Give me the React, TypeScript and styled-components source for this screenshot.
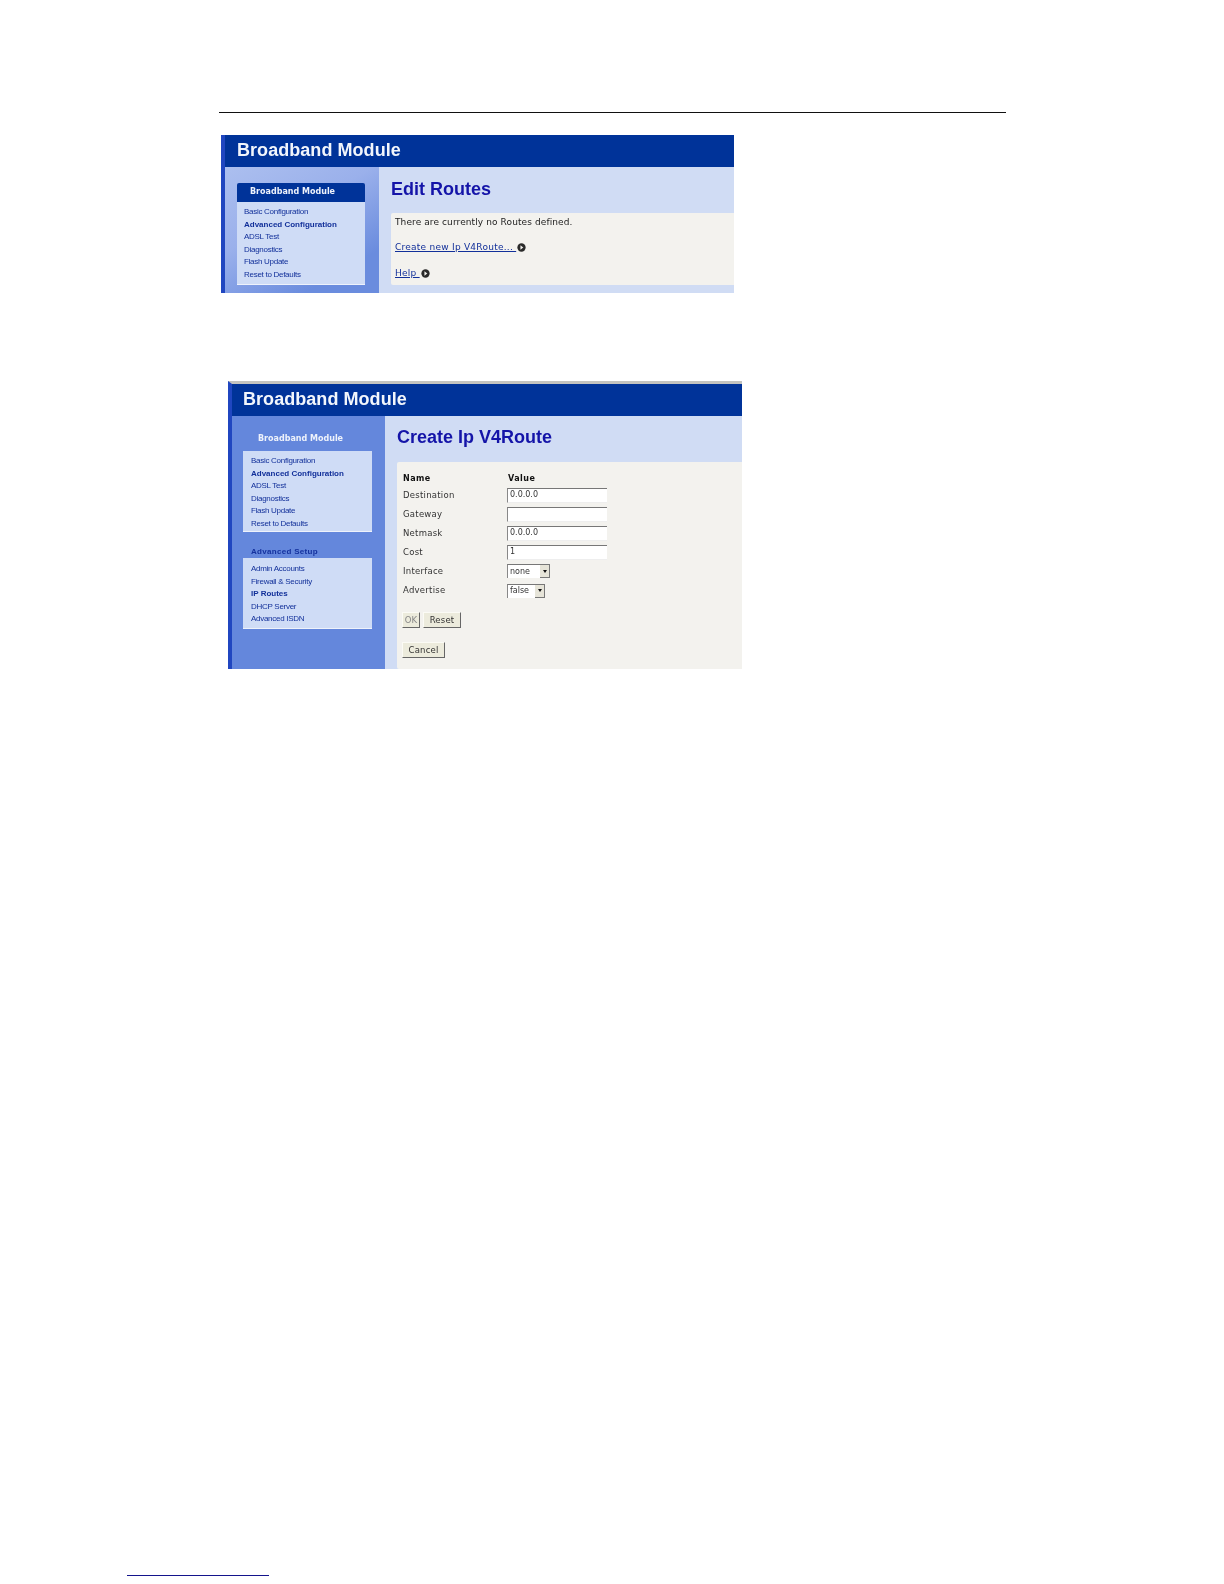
import React from "react";
import styled, { createGlobalStyle } from "styled-components";

const Global = createGlobalStyle`
  html, body { margin: 0; padding: 0; background: #fff; }
  body { font-family: "DejaVu Sans", sans-serif; }
`;

const Page = styled.div`
  width: 1224px;
  height: 1584px;
  box-sizing: border-box;
  padding-top: 112px;
  display: flex;
  flex-direction: column;
  overflow: hidden;
`;
const Rule = styled.hr`
  margin: 0 0 0 219px;
  width: 787px;
  height: 1px;
  border: 0;
  background: #111;
  flex: none;
`;
const Shot = styled.section<{ $left: number; $top: number; $width: number; $height: number; $gray?: boolean }>`
  margin: ${p => p.$top}px 0 0 ${p => p.$left}px;
  width: ${p => p.$width}px;
  height: ${p => p.$height}px;
  flex: none;
  box-sizing: border-box;
  border-left: 4px solid #2046c0;
  border-top: ${p => (p.$gray ? "3px solid #c4c4c0" : "0")};
  display: flex;
  flex-direction: column;
  filter: blur(0.3px);
`;
const Banner = styled.header<{ $pad: number }>`
  height: 32px;
  flex: none;
  box-sizing: border-box;
  background: #003399;
  color: #f2f6fc;
  font: bold 18px/1 "Liberation Sans", sans-serif;
  letter-spacing: 0.05px;
  padding: 0 0 2px ${p => p.$pad}px;
  display: flex;
  align-items: center;
`;
const Body = styled.div`
  flex: 1;
  display: flex;
  min-height: 0;
`;
const Side = styled.aside<{ $w: number; $soft?: boolean }>`
  width: ${p => p.$w}px;
  flex: none;
  box-sizing: border-box;
  background: ${p => (p.$soft ? "linear-gradient(150deg, #acbfef 0%, #9ab0eb 40%, #6a8cde 80%)" : "#6487dc")};
`;
const Nav = styled.div<{ $left: number; $top: number; $w: number }>`
  margin: ${p => p.$top}px 0 0 ${p => p.$left}px;
  width: ${p => p.$w}px;
`;
const NavHead = styled.div<{ $filled?: boolean; $h: number; $gap?: number; $pad: number }>`
  height: ${p => p.$h}px;
  margin-bottom: ${p => p.$gap ?? 0}px;
  background: ${p => (p.$filled ? "#003399" : "transparent")};
  color: #eef2fb;
  font: bold 8px/1 "DejaVu Sans", sans-serif;
  display: flex;
  align-items: center;
  padding: 0 0 1px ${p => p.$pad}px;
  box-sizing: border-box;
  border-radius: 2px 2px 0 0;
`;
const SetupHead = styled.div`
  height: 26px;
  padding: 14px 0 0 8px;
  box-sizing: border-box;
  color: #15329e;
  font: bold 8px/12px "Liberation Sans", sans-serif;
  letter-spacing: 0.3px;
`;
const NavList = styled.ul<{ $h: number; $top: number; $left: number }>`
  margin: 0;
  height: ${p => p.$h}px;
  padding: ${p => p.$top}px 0 0 ${p => p.$left}px;
  box-sizing: border-box;
  list-style: none;
  background: #cfdcf6;
  border-bottom: 1px solid #eef2fb;
`;
const NavItem = styled.li<{ $bold?: boolean }>`
  height: 12.6px;
  font: ${p => (p.$bold ? "bold" : "normal")} 8px/12.6px "Liberation Sans", sans-serif;
  letter-spacing: ${p => (p.$bold ? "0" : "-0.28px")};
  color: #12309a;
  white-space: nowrap;
`;
const Main = styled.main`
  flex: 1;
  min-width: 0;
  background: #d0dcf4;
  display: flex;
  flex-direction: column;
`;
const Title = styled.h1<{ $top: number; $h: number }>`
  margin: ${p => p.$top}px 0 0 12px;
  height: ${p => p.$h}px;
  font: bold 18px/1 "Liberation Sans", sans-serif;
  color: #1414a8;
`;
const Box = styled.div<{ $h: number }>`
  margin-left: 12px;
  height: ${p => p.$h}px;
  box-sizing: border-box;
  background: #f3f2ee;
  border-radius: 2px 0 0 2px;
  font: 8.5px/1 "DejaVu Sans", sans-serif;
  color: #222;
`;
const Message = styled.p`
  margin: 0;
  padding: 5px 0 0 4px;
  height: 30px;
  box-sizing: border-box;
  font-size: 9px;
  letter-spacing: 0.1px;
`;
const LinkRow = styled.div`
  height: 26px;
  padding-left: 4px;
  display: flex;
  align-items: flex-start;
  gap: 1px;
`;
const TextLink = styled.a`
  color: #12309a;
  font-size: 9px;
  text-decoration: underline;
  letter-spacing: 0.25px;
  white-space: pre;
`;
const Table = styled.div`
  padding: 10px 0 0 6px;
  display: grid;
  grid-template-columns: 104px 1fr;
  grid-template-rows: 13.5px repeat(6, 19.1px);
  align-items: center;
`;
const ColHead = styled.div`
  font-weight: bold;
  font-size: 8px;
  letter-spacing: 0.45px;
  color: #111;
`;
const ValueHead = styled(ColHead)`
  padding-left: 1px;
`;
const Label = styled.div`
  letter-spacing: 0.25px;
  color: #333;
`;
const Field = styled.div`
  width: 100px;
  height: 15px;
  box-sizing: border-box;
  background: #fff;
  border-top: 1px solid #777;
  border-left: 1px solid #888;
  border-bottom: 1px solid #eee;
  padding: 2px 0 0 2px;
  font: 8px/1 "DejaVu Sans", sans-serif;
  color: #333;
`;
const Select = styled.div<{ $w: number }>`
  width: ${p => p.$w}px;
  height: 14px;
  box-sizing: border-box;
  background: #fff;
  border-top: 1px solid #777;
  border-left: 1px solid #888;
  display: flex;
  justify-content: space-between;
  align-items: center;
  padding-left: 2px;
  font: 8px/1 "DejaVu Sans", sans-serif;
  color: #333;
`;
const Arrow = styled.span`
  width: 10px;
  height: 13px;
  box-sizing: border-box;
  background: #e6e4d8;
  border-right: 1px solid #777;
  border-bottom: 1px solid #777;
  display: flex;
  align-items: center;
  justify-content: center;
  &::after {
    content: "";
    border-top: 3px solid #111;
    border-left: 2.5px solid transparent;
    border-right: 2.5px solid transparent;
  }
`;
const Buttons = styled.div<{ $top: number }>`
  margin: ${p => p.$top}px 0 0 5px;
  display: flex;
  gap: 3px;
`;
const Btn = styled.button<{ $w: number; $off?: boolean }>`
  width: ${p => p.$w}px;
  height: 16px;
  padding: 0;
  box-sizing: border-box;
  background: #ecebdc;
  border: 0;
  border-right: 1px solid #666;
  border-bottom: 1px solid #666;
  border-top: 1px solid #fbfbf5;
  border-left: 1px solid #fbfbf5;
  font: 8.5px/1 "DejaVu Sans", sans-serif;
  letter-spacing: 0.2px;
  color: ${p => (p.$off ? "#888" : "#333")};
`;
const Foot = styled.div`
  margin: auto 0 8px 127px;
  width: 142px;
  height: 1px;
  flex: none;
  background: #14148c;
`;

const Go = () => (
  <svg width="9" height="9" viewBox="0 0 10 10">
    <circle cx="5" cy="5" r="4.6" fill="#2a2a2a" />
    <path d="M3.8 2.6 7 5 3.8 7.4Z" fill="#f3f2ee" />
  </svg>
);

const main = ["Basic Configuration", "Advanced Configuration", "ADSL Test", "Diagnostics", "Flash Update", "Reset to Defaults"];
const setup = ["Admin Accounts", "Firewall & Security", "IP Routes", "DHCP Server", "Advanced ISDN"];
const Items = ({ list, bold }: { list: string[]; bold: string }) => (
  <>
    {list.map(t => (
      <NavItem key={t} $bold={t === bold}>{t}</NavItem>
    ))}
  </>
);

export default function App() {
  return (
    <Page>
      <Global />
      <Rule />
      <Shot $left={221} $top={22} $width={513} $height={158}>
        <Banner $pad={12}>Broadband Module</Banner>
        <Body>
          <Side $w={154} $soft>
            <Nav $left={12} $top={16} $w={128}>
              <NavHead $filled $h={19} $pad={13}>Broadband Module</NavHead>
              <NavList $h={83} $top={4} $left={7}>
                <Items list={main} bold="Advanced Configuration" />
              </NavList>
            </Nav>
          </Side>
          <Main>
            <Title $top={13} $h={33}>Edit Routes</Title>
            <Box $h={72}>
              <Message>There are currently no Routes defined.</Message>
              <LinkRow><TextLink>Create new Ip V4Route... </TextLink><Go /></LinkRow>
              <LinkRow><TextLink>Help </TextLink><Go /></LinkRow>
            </Box>
          </Main>
        </Body>
      </Shot>
      <Shot $left={228} $top={88} $width={514} $height={288} $gray>
        <Banner $pad={11}>Broadband Module</Banner>
        <Body>
          <Side $w={153}>
            <Nav $left={11} $top={15} $w={129}>
              <NavHead $h={17} $gap={3} $pad={15}>Broadband Module</NavHead>
              <NavList $h={81} $top={4} $left={8}>
                <Items list={main} bold="Advanced Configuration" />
              </NavList>
              <SetupHead>Advanced Setup</SetupHead>
              <NavList $h={71} $top={5} $left={8}>
                <Items list={setup} bold="IP Routes" />
              </NavList>
            </Nav>
          </Side>
          <Main>
            <Title $top={12} $h={34}>Create Ip V4Route</Title>
            <Box $h={207}>
              <Table>
                <ColHead>Name</ColHead><ValueHead>Value</ValueHead>
                <Label>Destination</Label><Field>0.0.0.0</Field>
                <Label>Gateway</Label><Field />
                <Label>Netmask</Label><Field>0.0.0.0</Field>
                <Label>Cost</Label><Field>1</Field>
                <Label>Interface</Label><Select $w={43}>none<Arrow /></Select>
                <Label>Advertise</Label><Select $w={38}>false<Arrow /></Select>
              </Table>
              <Buttons $top={12}><Btn $w={18} $off>OK</Btn><Btn $w={38}>Reset</Btn></Buttons>
              <Buttons $top={14}><Btn $w={43}>Cancel</Btn></Buttons>
            </Box>
          </Main>
        </Body>
      </Shot>
      <Foot />
    </Page>
  );
}
